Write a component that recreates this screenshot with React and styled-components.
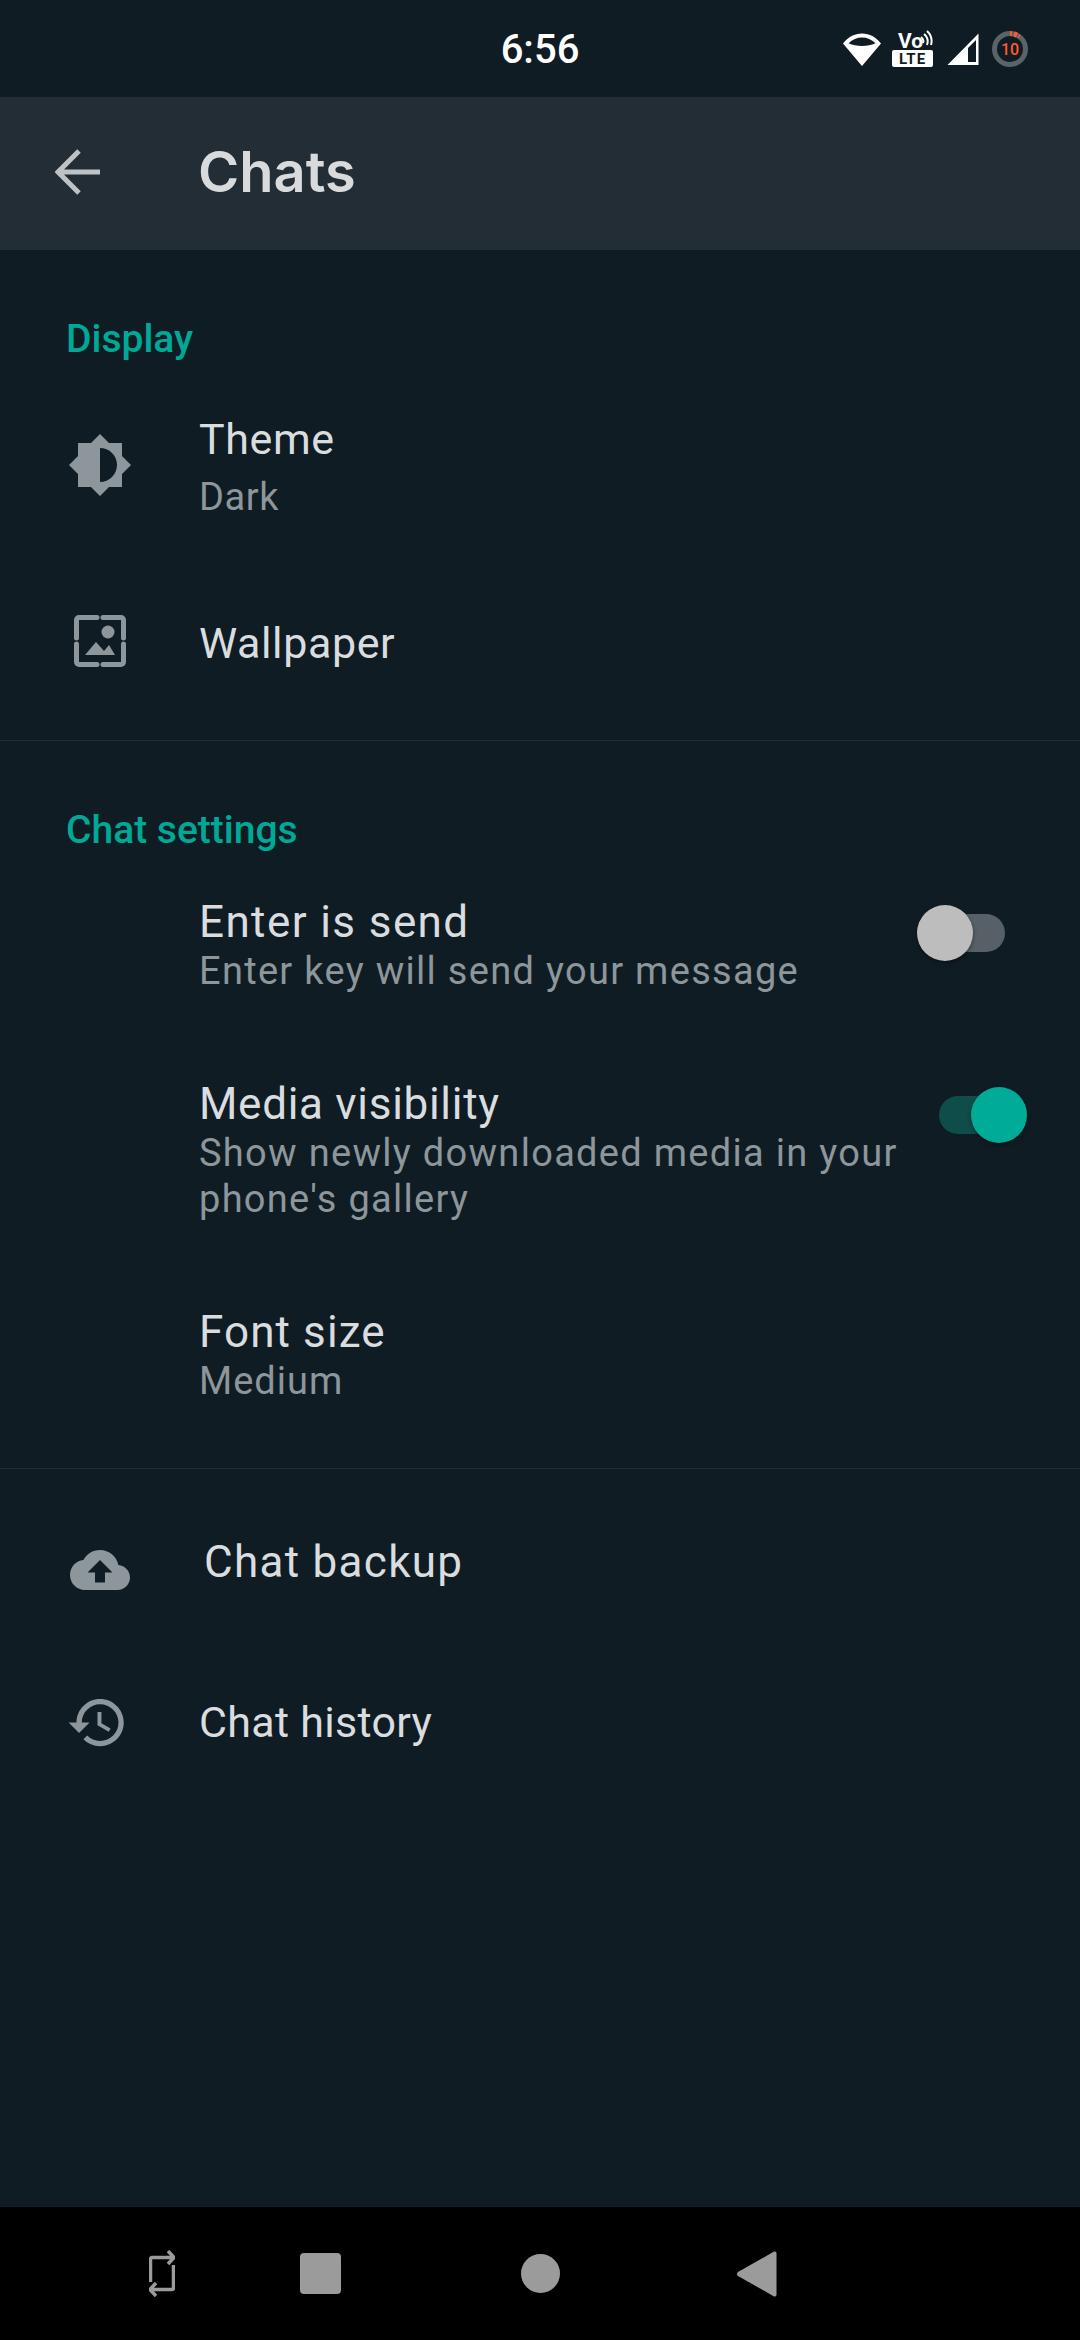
import React from 'react';
import styled, { createGlobalStyle } from 'styled-components';

const GlobalStyle = createGlobalStyle`
  html, body {
    margin: 0;
    padding: 0;
    background: #101c24;
    font-family: Roboto, "Noto Sans", sans-serif;
  }
  * { box-sizing: border-box; }
`;

const Page = styled.div`
  width: 1080px;
  height: 2340px;
  display: flex;
  flex-direction: column;
  background: #101c24;
  overflow: hidden;
`;

const StatusBar = styled.div`
  position: relative;
  height: 97px;
  flex: none;
  display: flex;
  align-items: center;
  justify-content: flex-end;
  padding-right: 52px;
`;

const Clock = styled.span`
  position: absolute;
  left: 0;
  right: 0;
  top: 28px;
  text-align: center;
  color: #fff;
  font-size: 40px;
  line-height: 44px;
  font-weight: 500;
`;

const StatusIcon = styled.span`
  display: flex;
  margin-left: ${(p) => p.$gap}px;
`;

const Toolbar = styled.header`
  height: 153px;
  flex: none;
  display: flex;
  align-items: center;
  padding: 0 0 3px 55px;
  gap: 97px;
  background: #232d36;
`;

const ToolbarTitle = styled.h1`
  margin: 0;
  font-family: Inter, Roboto, sans-serif;
  font-size: 56px;
  line-height: 60px;
  font-weight: 600;
  color: #d9dadc;
`;

const Main = styled.main`
  flex: 1;
`;

const Section = styled.section`
  padding: ${(p) => p.$top}px 0 ${(p) => p.$bottom}px;
  border-bottom: ${(p) => (p.$divider ? '1px solid #222d34' : 'none')};
`;

const SectionLabel = styled.h2`
  margin: 0;
  padding-left: 66px;
  font-size: 39px;
  line-height: 49px;
  font-weight: 500;
  color: #00a896;
`;

const Row = styled.div`
  display: grid;
  grid-template-columns: 199px 1fr auto;
  align-items: ${(p) => (p.$top ? 'start' : 'center')};
  padding: ${(p) => p.$pad}px 75px ${(p) => p.$pad}px 0;
`;

/* shift moves the icon off the row's centre without changing the row height */
const IconSlot = styled.div`
  height: 48px;
  margin-top: ${(p) => p.$shift || 0}px;
  margin-bottom: ${(p) => -(p.$shift || 0)}px;
  padding-right: ${(p) => p.$left || 0}px;
  display: flex;
  justify-content: center;
  align-items: center;
  color: #8c969b;
`;

const TextBlock = styled.div`
  padding-left: ${(p) => (p.$indent ? 5 : 0)}px;
`;

const Title = styled.div`
  font-size: ${(p) => (p.$large ? 44 : 43)}px;
  line-height: 48px;
  color: #dadddf;
  letter-spacing: ${(p) => p.$track ?? 0.6}px;
`;

const Subtitle = styled.div`
  margin-top: ${(p) => p.$gap}px;
  font-size: 38px;
  line-height: 46px;
  color: #8c969b;
  letter-spacing: ${(p) => p.$track ?? 1.3}px;
`;

const Track = styled.div`
  position: relative;
  width: 66px;
  height: 38px;
  margin-top: 16px;
  border-radius: 19px;
  background: ${(p) => (p.$on ? '#0e4d4a' : '#566066')};
`;

const Thumb = styled.div`
  position: absolute;
  top: -9px;
  ${(p) => (p.$on ? 'right: -22px;' : 'left: -22px;')}
  width: 56px;
  height: 56px;
  border-radius: 50%;
  background: ${(p) => (p.$on ? '#00ab98' : '#bdbdbd')};
  box-shadow: 0 2px 4px rgba(0, 0, 0, 0.4);
`;

const NavBar = styled.nav`
  height: 133px;
  flex: none;
  display: grid;
  grid-template-columns: 160px 156px 284px 150px;
  align-items: center;
  padding-left: 82px;
  background: #000;
  color: #9b9b9b;
`;

const NavItem = styled.div`
  display: flex;
  justify-content: center;
  align-items: center;
`;

const NavSquare = styled.div`
  width: 41px;
  height: 41px;
  border-radius: 4px;
  background: currentColor;
`;

const NavCircle = styled.div`
  width: 39px;
  height: 39px;
  border-radius: 50%;
  background: currentColor;
`;

const Toggle = ({ on }) => (
  <Track $on={on}>
    <Thumb $on={on} />
  </Track>
);

const WifiIcon = () => (
  <svg width="40" height="34" viewBox="0 0 40 34">
    <path
      fill="#fff"
      fillRule="evenodd"
      d="M20 34 1 11.500C6 5 12.500 1.500 20 1.500S34 5 39 11.500L20 34ZM6.500 11.200C10.500 13 15 14 20 14s9.500-1 13.500-2.800C29.500 7.500 25 5.500 20 5.500S10.500 7.500 6.500 11.200Z"
    />
  </svg>
);

const VolteIcon = () => (
  <svg width="42" height="38" viewBox="0 0 42 38">
    <text x="6" y="18" fill="#fff" fontFamily="Roboto" fontWeight="700" fontSize="21">Vo</text>
    <path d="M29 7a5 5 0 0 1 2 6M32 4a10 10 0 0 1 3 11M35 1a14 14 0 0 1 4 14" stroke="#fff" strokeWidth="2" fill="none" />
    <rect x="0" y="20" width="41" height="17" rx="2" fill="#fff" />
    <text x="20.500" y="34" textAnchor="middle" fill="#101c24" fontFamily="Roboto" fontWeight="700" fontSize="15" letterSpacing="1">LTE</text>
  </svg>
);

const SignalIcon = () => (
  <svg width="32" height="32" viewBox="0 0 32 32">
    <path fill="#fff" fillRule="evenodd" d="M31.500 0.500V32H0.500L31.500 0.500ZM29 7 21 15V29H29V7Z" />
  </svg>
);

const TimerIcon = () => (
  <svg width="36" height="36" viewBox="0 0 36 36">
    <circle cx="18" cy="18" r="15.500" fill="none" stroke="#596368" strokeWidth="5" />
    <path d="M18 2.500a15.500 15.500 0 0 1 2 .15" stroke="#ff5a30" strokeWidth="5" fill="none" />
    <path d="M22 3a15.500 15.500 0 0 1 3 1.200" stroke="#ff5a30" strokeWidth="5" fill="none" />
    <path d="M26.500 5a15.500 15.500 0 0 1 1 .7" stroke="#ff5a30" strokeWidth="4" fill="none" />
    <text x="18" y="24" textAnchor="middle" fill="#ff5a30" fontFamily="Roboto" fontWeight="500" fontSize="16">10</text>
  </svg>
);

const BackIcon = () => (
  <svg width="46" height="46" viewBox="0 0 46 46">
    <path d="M45 23H3M24 2 3 23l21 21" fill="none" stroke="#bfc2c5" strokeWidth="5" />
  </svg>
);

const ThemeIcon = () => (
  <svg width="62" height="62" viewBox="0 0 62 62">
    <path fill="currentColor" d="M31 0 40 9H53V22L62 31 53 40V53H40L31 62 22 53H9V40L0 31 9 22V9H22Z" />
    <path fill="#101c24" d="M31 14a17 17 0 0 1 0 34Z" />
  </svg>
);

const WallpaperIcon = () => (
  <svg width="52" height="52" viewBox="0 0 52 52">
    <path
      d="M23 2.500H5A2.500 2.500 0 0 0 2.500 5V23M29 2.500H47A2.500 2.500 0 0 1 49.500 5V23M2.500 29V47A2.500 2.500 0 0 0 5 49.500H23M49.500 29V47A2.500 2.500 0 0 1 47 49.500H29"
      fill="none"
      stroke="currentColor"
      strokeWidth="5"
      strokeLinecap="round"
    />
    <circle cx="34" cy="17" r="6.500" fill="currentColor" />
    <path fill="currentColor" d="M11 40 22 27 30 36 35 30 41 40Z" />
  </svg>
);

const BackupIcon = () => (
  <svg width="60" height="60" viewBox="0 0 24 24">
    <path
      fill="currentColor"
      d="M19.350 10.040C18.670 6.590 15.640 4 12 4 9.110 4 6.600 5.640 5.350 8.040 2.340 8.360 0 10.910 0 14c0 3.310 2.690 6 6 6h13c2.760 0 5-2.240 5-5 0-2.640-2.050-4.780-4.650-4.960zM14 13v4h-4v-4H7l5-5 5 5h-3z"
    />
  </svg>
);

const HistoryIcon = () => (
  <svg width="63" height="63" viewBox="0 0 24 24">
    <path
      fill="currentColor"
      d="M13 3c-4.970 0-9 4.030-9 9H1l3.890 3.890.07.14L9 12H6c0-3.870 3.130-7 7-7s7 3.130 7 7-3.130 7-7 7c-1.930 0-3.680-.79-4.940-2.060l-1.420 1.420C8.270 19.990 10.510 21 13 21c4.970 0 9-4.030 9-9s-4.030-9-9-9zm-1 5v5l4.280 2.540.72-1.210-3.500-2.080V8H12z"
    />
  </svg>
);

const RecentsIcon = () => (
  <svg width="26" height="47" viewBox="0 0 26 47">
    <path
      d="M1.500 32V9A1.500 1.500 0 0 1 3 7.500H24M19 1l6 6.500-6 6.500M24.500 15V38A1.500 1.500 0 0 1 23 39.500H2M7 33 1 39.500 7 46"
      fill="none"
      stroke="currentColor"
      strokeWidth="3.500"
    />
  </svg>
);

const BackTriangle = () => (
  <svg width="40" height="46" viewBox="0 0 40 46">
    <path
      fill="currentColor"
      d="M37 .6 1 21a2.500 2.500 0 0 0 0 4l36 20.400A2 2 0 0 0 39.500 43.500V2.500A2 2 0 0 0 37 .6Z"
    />
  </svg>
);

const App = () => (
  <Page>
    <GlobalStyle />
    <StatusBar>
      <Clock>6:56</Clock>
      <StatusIcon $gap={0}><WifiIcon /></StatusIcon>
      <StatusIcon $gap={10}><VolteIcon /></StatusIcon>
      <StatusIcon $gap={13}><SignalIcon /></StatusIcon>
      <StatusIcon $gap={13}><TimerIcon /></StatusIcon>
    </StatusBar>
    <Toolbar>
      <BackIcon />
      <ToolbarTitle>Chats</ToolbarTitle>
    </Toolbar>
    <Main>
      <Section $top={65} $bottom={25} $divider>
        <SectionLabel>Display</SectionLabel>
        <Row $pad={51}>
          <IconSlot $shift={-3}><ThemeIcon /></IconSlot>
          <TextBlock>
            <Title>Theme</Title>
            <Subtitle $gap={11} $track={0.6}>Dark</Subtitle>
          </TextBlock>
        </Row>
        <Row $pad={48}>
          <IconSlot $shift={-2}><WallpaperIcon /></IconSlot>
          <TextBlock>
            <Title>Wallpaper</Title>
          </TextBlock>
        </Row>
      </Section>
      <Section $top={65} $bottom={21} $divider>
        <SectionLabel>Chat settings</SectionLabel>
        <Row $pad={43} $top>
          <span />
          <TextBlock>
            <Title $large $track={1.4}>Enter is send</Title>
            <Subtitle $gap={2}>Enter key will send your message</Subtitle>
          </TextBlock>
          <Toggle />
        </Row>
        <Row $pad={43} $top>
          <span />
          <TextBlock>
            <Title $large $track={0.7}>Media visibility</Title>
            <Subtitle $gap={2}>Show newly downloaded media in your phone's gallery</Subtitle>
          </TextBlock>
          <Toggle on />
        </Row>
        <Row $pad={43} $top>
          <span />
          <TextBlock>
            <Title $large $track={1.1}>Font size</Title>
            <Subtitle $gap={2} $track={1}>Medium</Subtitle>
          </TextBlock>
        </Row>
      </Section>
      <Section $top={13} $bottom={0}>
        <Row $pad={56}>
          <IconSlot $shift={8}><BackupIcon /></IconSlot>
          <TextBlock $indent>
            <Title $large $track={1.3}>Chat backup</Title>
          </TextBlock>
        </Row>
        <Row $pad={56}>
          <IconSlot $left={5}><HistoryIcon /></IconSlot>
          <TextBlock>
            <Title $track={0.3}>Chat history</Title>
          </TextBlock>
        </Row>
      </Section>
    </Main>
    <NavBar>
      <NavItem><RecentsIcon /></NavItem>
      <NavItem><NavSquare /></NavItem>
      <NavItem><NavCircle /></NavItem>
      <NavItem><BackTriangle /></NavItem>
    </NavBar>
  </Page>
);

export default App;
